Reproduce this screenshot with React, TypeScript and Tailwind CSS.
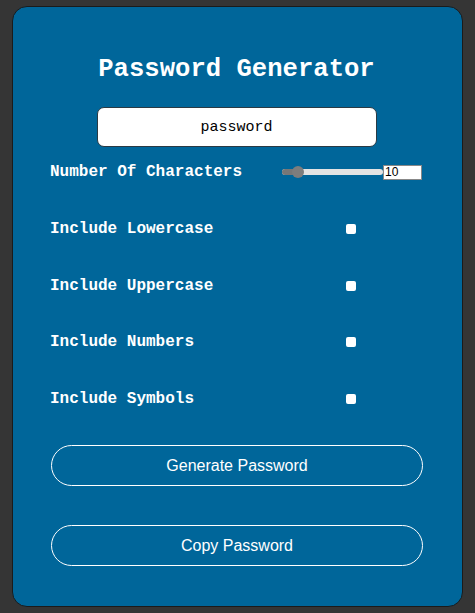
import { useState } from "react";

const options = [
  "Include Lowercase",
  "Include Uppercase",
  "Include Numbers",
  "Include Symbols",
];

function Slider({ value }: { value: number }) {
  // fake range control, thumb placed from value
  const pct = ((value - 4) / (50 - 4)) * 100;
  return (
    <div className="relative h-[14px] w-[101px] flex items-center">
      <div className="h-[6px] w-full rounded-full bg-[#e3e3e3] overflow-hidden">
        <div className="h-full bg-[#777]" style={{ width: `${pct}%` }} />
      </div>
      <div
        className="absolute top-[1px] h-[12px] w-[12px] rounded-full bg-[#7d7d7d]"
        style={{ left: `calc(${pct}% - 3px)` }}
      />
    </div>
  );
}

export default function App() {
  const [length] = useState(10);

  return (
    <div className="min-h-[613px] bg-[#353535] pt-[6px] pb-[6px] px-[12px]">
      <div
        className="h-[601px] w-[451px] rounded-[15px] border border-[#1b1b1b] bg-[#00669a] pt-[48px] pl-[37px] pr-[39px] flex flex-col text-white"
        style={{ fontFamily: '"Liberation Mono", "Courier New", monospace' }}
      >
        <h1 className="text-center text-[25.6px] leading-[30px] font-bold">Password Generator</h1>

        <div className="mt-[22px] flex justify-center">
          <input
            readOnly
            value="password"
            className="h-[40px] w-[280px] rounded-[7px] border border-[#2a3a44] bg-white text-center text-[15px] text-black outline-none"
            style={{ fontFamily: '"Liberation Mono", "Courier New", monospace' }}
          />
        </div>

        <div className="mt-[15px] h-[20px] flex items-center">
          <span className="w-[232px] text-[16px] font-bold">Number Of Characters</span>
          <Slider value={length} />
          <input
            type="number"
            readOnly
            value={length}
            className="h-[15px] w-[39px] border border-[#888] bg-white pl-[1px] text-[12px] leading-[13px] text-black outline-none"
            style={{ fontFamily: '"Liberation Sans", Arial, sans-serif' }}
          />
        </div>

        {options.map((label, i) => (
          <div key={label} className={`h-[20px] flex items-center ${i === 0 ? "mt-[37px]" : "mt-[36.5px]"}`}>
            <span className="w-[296px] text-[16px] font-bold">{label}</span>
            <span className="h-[10px] w-[10px] rounded-[2px] bg-white" />
          </div>
        ))}

        <button
          className="mt-[36.5px] ml-[1px] h-[41px] w-[372px] rounded-full border border-white text-[16px] text-white"
          style={{ fontFamily: '"Liberation Sans", Arial, sans-serif' }}
        >
          Generate Password
        </button>
        <button
          className="mt-[39px] ml-[1px] h-[41px] w-[372px] rounded-full border border-white text-[16px] text-white"
          style={{ fontFamily: '"Liberation Sans", Arial, sans-serif' }}
        >
          Copy Password
        </button>
      </div>
    </div>
  );
}
